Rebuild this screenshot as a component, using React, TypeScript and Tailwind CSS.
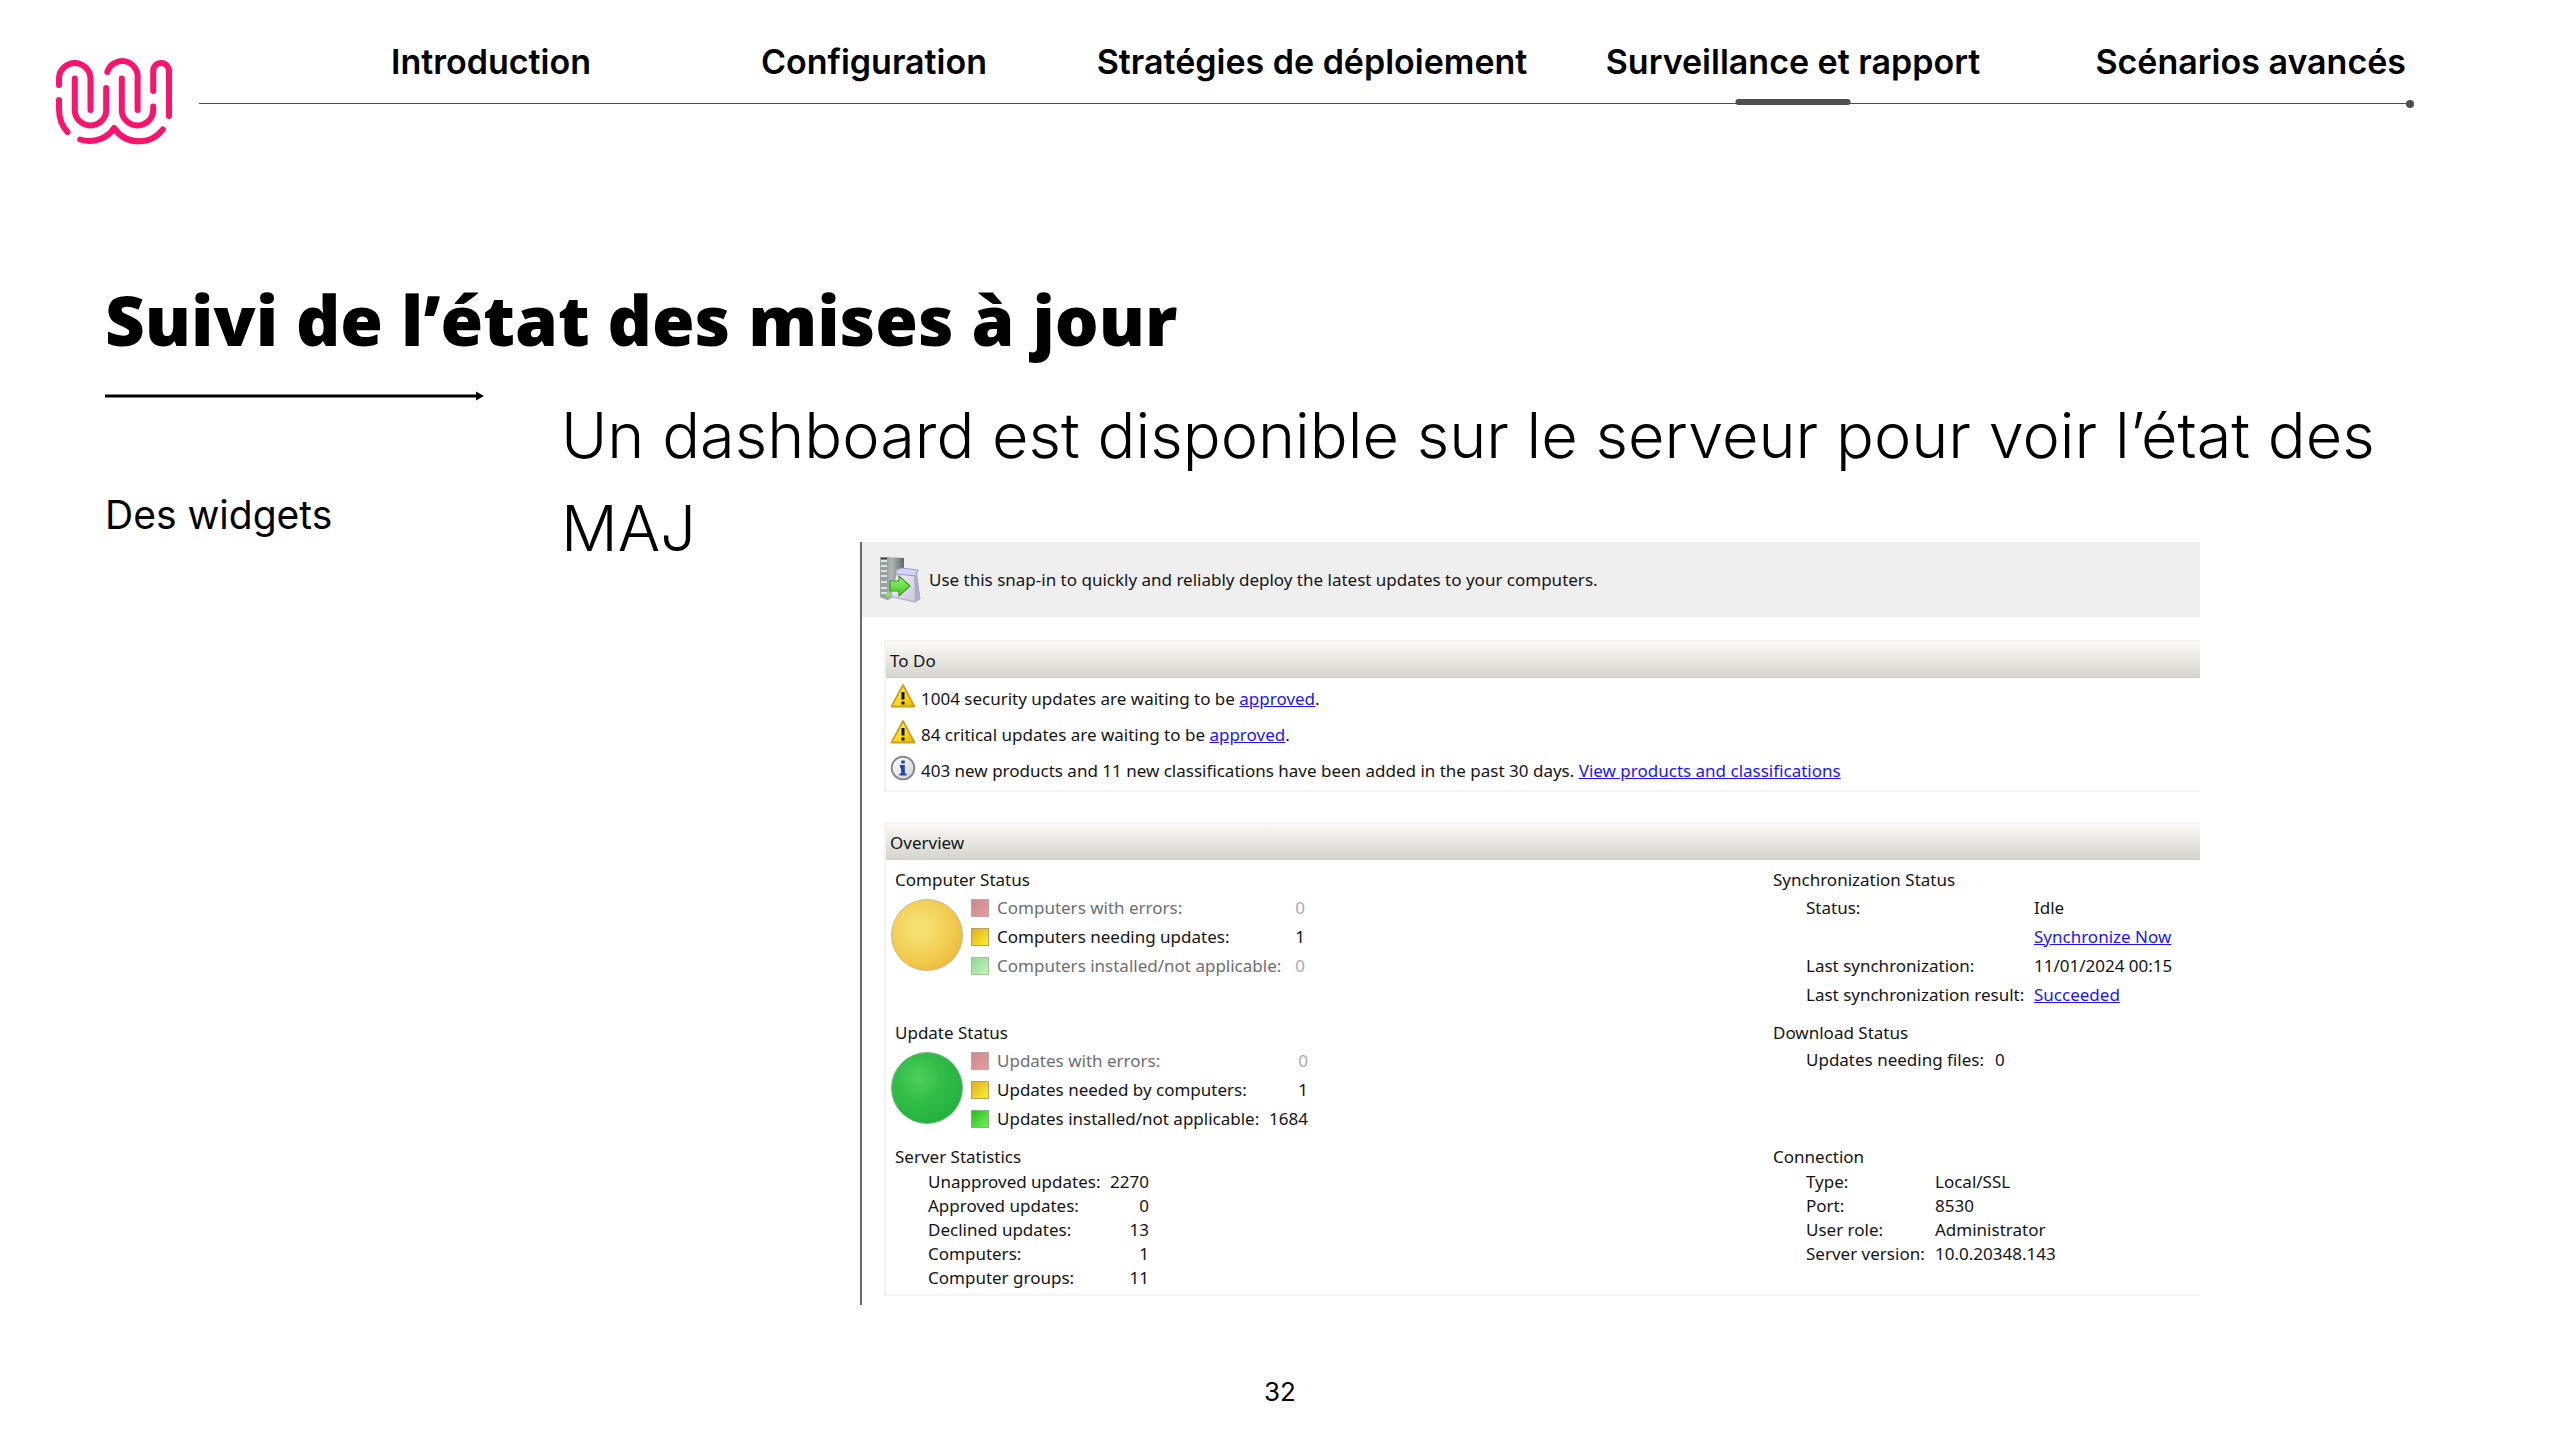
import type { ReactNode } from "react";

const navItems = [
  "Introduction",
  "Configuration",
  "Stratégies de déploiement",
  "Surveillance et rapport",
  "Scénarios avancés",
];
const activeItem = "Surveillance et rapport";

function Logo() {
  return (
    <svg viewBox="56 60 116 84" className="mt-[60px] h-[84px] w-[116px] shrink-0 overflow-visible" fill="none" stroke="#fb136d" strokeWidth="6" strokeLinecap="round" strokeLinejoin="round" aria-label="Logo">
      <path d="M59 85V79A15.75 16 0 0 1 90.5 79V110" />
      <path d="M74.8 78.5V110A15.7 15.5 0 0 0 106.2 110V88" />
      <path d="M107.3 72A15.6 16 0 0 1 137.6 79V110" />
      <path d="M121.8 78.5V110A15.7 15.5 0 0 0 153.2 110V106.5" />
      <path d="M153.2 91V71A7.9 8 0 0 1 169 71V86V116" />
      <path d="M59 100V109C59 118.500 62 126 67.500 132" />
      <path d="M80.200 139.500C93 143.500 107 139 114.200 128C126 146 151 145 162.800 129.500" />
    </svg>
  );
}

function ServerIcon() {
  return (
    <svg viewBox="0 0 44 48" className="h-12 w-11 shrink-0" aria-hidden="true">
      <defs>
        <linearGradient id="tower" x1="0" x2="1">
          <stop offset="0" stopColor="#8c9692" />
          <stop offset="0.500" stopColor="#aeb6b3" />
          <stop offset="1" stopColor="#5f6967" />
        </linearGradient>
        <linearGradient id="box" x1="0" x2="1" y2="1">
          <stop offset="0" stopColor="#f7f6fd" />
          <stop offset="1" stopColor="#c5c3d8" />
        </linearGradient>
        <linearGradient id="arrow" x1="0" x2="0" y1="0" y2="1">
          <stop offset="0" stopColor="#9bf57c" />
          <stop offset="1" stopColor="#3ecb1c" />
        </linearGradient>
      </defs>
      <path d="M2 1H10L26 2V36L10 44L2 41Z" fill="url(#tower)" />
      <path d="M2 1H10V44L2 41Z" fill="#99a29f" />
      <path d="M3 5H9M3 10H9M3 15H9M3 20H9M3 26H9M3 32H9M3 37H9" stroke="#dde3e1" strokeWidth="2" />
      <path d="M3 2.500H9" stroke="#3a4345" strokeWidth="1.500" />
      <path d="M19 16L38 14L42 43L37 46L15 41L13 38Z" fill="url(#box)" stroke="#a9a7c0" />
      <path d="M36 19L38 14L42 43L37 46Z" fill="#aeacc6" />
      <path d="M18 14L24 12L40 14L38 20L18 18Z" fill="#d3d1f3" stroke="#9f9dc6" />
      <path d="M12 25H21V20L32 30L21 40V35H12Z" fill="url(#arrow)" stroke="#3a9a24" strokeWidth="1.200" />
      <circle cx="10" cy="38.500" r="2" fill="#6dff1f" />
    </svg>
  );
}

function WarningIcon() {
  return (
    <svg viewBox="0 0 26 26" className="h-[26px] w-[26px] shrink-0" aria-hidden="true">
      <defs>
        <linearGradient id="warn" x1="0" x2="1" y1="0" y2="1">
          <stop offset="0" stopColor="#fff27a" />
          <stop offset="0.600" stopColor="#fbd91c" />
          <stop offset="1" stopColor="#e0b000" />
        </linearGradient>
      </defs>
      <path d="M13 2L24.500 23.500H1.500Z" fill="url(#warn)" stroke="#c9a21a" strokeWidth="1.800" strokeLinejoin="round" />
      <path d="M13 9V16.500" stroke="#111" strokeWidth="3" />
      <path d="M13 18.500V21.500" stroke="#111" strokeWidth="3" />
    </svg>
  );
}

function InfoIcon() {
  return (
    <svg viewBox="0 0 26 26" className="h-[26px] w-[26px] shrink-0" aria-hidden="true">
      <defs>
        <linearGradient id="info" x1="0" x2="1" y1="0" y2="1">
          <stop offset="0" stopColor="#ffffff" />
          <stop offset="1" stopColor="#d2d2d6" />
        </linearGradient>
      </defs>
      <circle cx="13" cy="13" r="11.300" fill="url(#info)" stroke="#8a8a8c" strokeWidth="2" />
      <path d="M13 5.500V8.500" stroke="#1d43b8" strokeWidth="3.600" />
      <path d="M10 11H13V19M9.500 19.500H16.500" stroke="#1d43b8" strokeWidth="2" />
      <path d="M13 10V20" stroke="#1d43b8" strokeWidth="3.600" />
    </svg>
  );
}

function Link({ children }: { children: ReactNode }) {
  return (
    <a href="#" className="text-[#1a14ff] underline">
      {children}
    </a>
  );
}

function Panel({ title, children, className }: { title: string; children: ReactNode; className: string }) {
  return (
    <section className={`border-y-2 border-l-2 border-[#f3f3f3] ${className}`}>
      <h2 className="h-9 border-b border-[#cfcec9] bg-linear-to-b from-[#fbfaf6] to-[#d5d4cf] pl-1 leading-[38px]">{title}</h2>
      {children}
    </section>
  );
}

const swatches = {
  red: "border-[#c3a4a6] bg-linear-to-br from-[#c98b90] to-[#e89a9c]",
  yellow: "border-[#b5a25c] bg-linear-to-br from-[#deaa26] to-[#fbf22f]",
  paleGreen: "border-[#a2bfa2] bg-linear-to-br from-[#92d694] to-[#c0f6b8]",
  green: "border-[#7fb678] bg-linear-to-br from-[#22bd17] to-[#72ee56]",
};

type StatusRow = { label: string; value: string; swatch: keyof typeof swatches; muted?: boolean };

function StatusBlock({ title, orb, rows, width }: { title: string; orb: string; rows: StatusRow[]; width: string }) {
  return (
    <section className="pl-2">
      <h3 className="leading-[26px]">{title}</h3>
      <div className="-ml-1 flex items-start gap-2">
        <div className={`mt-[6px] size-[72px] shrink-0 rounded-full border ${orb}`} />
        <table className={width}>
          <tbody>
            {rows.map((r) => (
              <tr key={r.label} className={`h-[29px] ${r.muted ? "text-[#6e6e72]" : "text-[#141414]"}`}>
                <td className="w-[26px] p-0">
                  <div className={`size-[18px] border ${swatches[r.swatch]}`} />
                </td>
                <th scope="row" className="p-0 text-left font-normal whitespace-nowrap">{r.label}</th>
                <td className={`p-0 text-right ${r.muted ? "text-[#a9a9ae]" : ""}`}>{r.value}</td>
              </tr>
            ))}
          </tbody>
        </table>
      </div>
    </section>
  );
}

type Field = { label: string; value: ReactNode };

function FieldBlock({ title, rows, labelWidth, rowHeight, valueClass = "" }: { title: string; rows: Field[]; labelWidth: string; rowHeight: string; valueClass?: string }) {
  return (
    <section className="pl-2">
      <h3 className="leading-[26px]">{title}</h3>
      <table className="ml-[33px]">
        <tbody>
          {rows.map((r, i) => (
            <tr key={i} className={rowHeight}>
              <th scope="row" className={`p-0 text-left font-normal whitespace-nowrap ${labelWidth}`}>{r.label}</th>
              <td className={`p-0 whitespace-nowrap ${valueClass}`}>{r.value}</td>
            </tr>
          ))}
        </tbody>
      </table>
    </section>
  );
}

function Dashboard() {
  return (
    <div className="relative -mt-[33px] mr-60 ml-[299px] border-l-2 border-[#6b6b6b] bg-white pb-[9px] font-['Noto_Sans',sans-serif] text-[17px] leading-[24px] text-[#141414]">
      <div className="flex h-[75px] items-center gap-[7px] bg-[#efefef] pt-px pl-4">
        <ServerIcon />
        <p>Use this snap-in to quickly and reliably deploy the latest updates to your computers.</p>
      </div>

      <Panel title="To Do" className="mt-[23px] ml-[22px] h-[152px]">
        <ul className="flex flex-col gap-[10px] pt-[5px] pl-1">
          <li className="flex h-[26px] gap-[5px] leading-[32px]">
            <WarningIcon />
            <span>1004 security updates are waiting to be <Link>approved</Link>.</span>
          </li>
          <li className="flex h-[26px] gap-[5px] leading-[32px]">
            <WarningIcon />
            <span>84 critical updates are waiting to be <Link>approved</Link>.</span>
          </li>
          <li className="flex h-[26px] gap-[5px] leading-[32px]">
            <InfoIcon />
            <span>403 new products and 11 new classifications have been added in the past 30 days. <Link>View products and classifications</Link></span>
          </li>
        </ul>
      </Panel>

      <Panel title="Overview" className="mt-[30px] ml-[22px]">
        <div className="grid grid-cols-[878fr_435fr] gap-y-[11px] pt-[7px] pb-1 pl-px">
          <StatusBlock
            title="Computer Status"
            width="w-[334px]"
            orb="border-[#c9b98a] bg-radial-[at_40%_40%] from-[#f6e070] from-15% via-[#f3cd52] via-50% to-[#e5ad2c]"
            rows={[
              { label: "Computers with errors:", value: "0", swatch: "red", muted: true },
              { label: "Computers needing updates:", value: "1", swatch: "yellow" },
              { label: "Computers installed/not applicable:", value: "0", swatch: "paleGreen", muted: true },
            ]}
          />
          <FieldBlock
            title="Synchronization Status"
            labelWidth="w-[228px]"
            rowHeight="h-[29px]"
            rows={[
              { label: "Status:", value: "Idle" },
              { label: "", value: <Link>Synchronize Now</Link> },
              { label: "Last synchronization:", value: "11/01/2024 00:15" },
              { label: "Last synchronization result:", value: <Link>Succeeded</Link> },
            ]}
          />
          <StatusBlock
            title="Update Status"
            width="w-[337px]"
            orb="border-[#7db489] bg-radial-[at_38%_36%] from-[#4fd05c] via-[#33bd48] via-35% to-[#1aab3a]"
            rows={[
              { label: "Updates with errors:", value: "0", swatch: "red", muted: true },
              { label: "Updates needed by computers:", value: "1", swatch: "yellow" },
              { label: "Updates installed/not applicable:", value: "1684", swatch: "green" },
            ]}
          />
          <FieldBlock
            title="Download Status"
            labelWidth="w-[189px]"
            rowHeight="h-[27px]"
            rows={[{ label: "Updates needing files:", value: "0" }]}
          />
          <FieldBlock
            title="Server Statistics"
            labelWidth="w-[182px]"
            rowHeight="h-6"
            valueClass="text-right"
            rows={[
              { label: "Unapproved updates:", value: "2270" },
              { label: "Approved updates:", value: "0" },
              { label: "Declined updates:", value: "13" },
              { label: "Computers:", value: "1" },
              { label: "Computer groups:", value: "11" },
            ]}
          />
          <FieldBlock
            title="Connection"
            labelWidth="w-[129px]"
            rowHeight="h-6"
            rows={[
              { label: "Type:", value: "Local/SSL" },
              { label: "Port:", value: "8530" },
              { label: "User role:", value: "Administrator" },
              { label: "Server version:", value: "10.0.20348.143" },
            ]}
          />
        </div>
      </Panel>
    </div>
  );
}

export default function App() {
  return (
    <div className="min-h-screen bg-white font-['Inter',sans-serif] text-black">
      <header className="flex gap-[27px] pr-[150px] pl-14">
        <Logo />
        <div className="flex-1 pt-10">
          <nav className="relative grid grid-cols-[382fr_384fr_492fr_470fr_382fr] border-b border-[#4d4d4d] pb-[19px] pl-[101px] text-[34px] leading-[44px] font-semibold whitespace-nowrap">
            {navItems.map((item, i) => (
              <a key={item} href="#" className={`relative ${i === navItems.length - 1 ? "pr-1 text-right" : "text-center"}`}>
                {item}
                {item === activeItem && (
                  <span className="absolute -bottom-[21px] left-1/2 h-[6px] w-[115px] -translate-x-1/2 rounded-full bg-[#4d4d4d]" />
                )}
              </a>
            ))}
            <span className="absolute -right-1 -bottom-[5px] size-2 rounded-full bg-[#4d4d4d]" />
          </nav>
        </div>
      </header>

      <main className="pr-[120px] pl-[105px]">
        <h1 className="mt-[135px] font-['Open_Sans',sans-serif] text-[69px] leading-[80px] font-extrabold">
          Suivi de l’état des mises à jour
        </h1>
        <div className="mt-[30px] flex">
          <aside className="w-[456px] shrink-0">
            <svg viewBox="0 0 379 14" className="h-[14px] w-[379px]" aria-hidden="true">
              <path d="M0 7H373" stroke="#000" strokeWidth="3" />
              <path d="M371 2.500L379 7L371 11.500Z" />
            </svg>
            <p className="mt-[88px] text-[39px] leading-[48px]">Des widgets</p>
          </aside>
          <div className="min-w-0 flex-1">
            <p className="text-[63px] leading-[93px] font-[330]">
              Un dashboard est disponible sur le serveur pour voir l’état des MAJ
            </p>
            <Dashboard />
          </div>
        </div>
      </main>

      <footer className="mt-[71px] text-center text-[26px] leading-8">32</footer>
    </div>
  );
}
